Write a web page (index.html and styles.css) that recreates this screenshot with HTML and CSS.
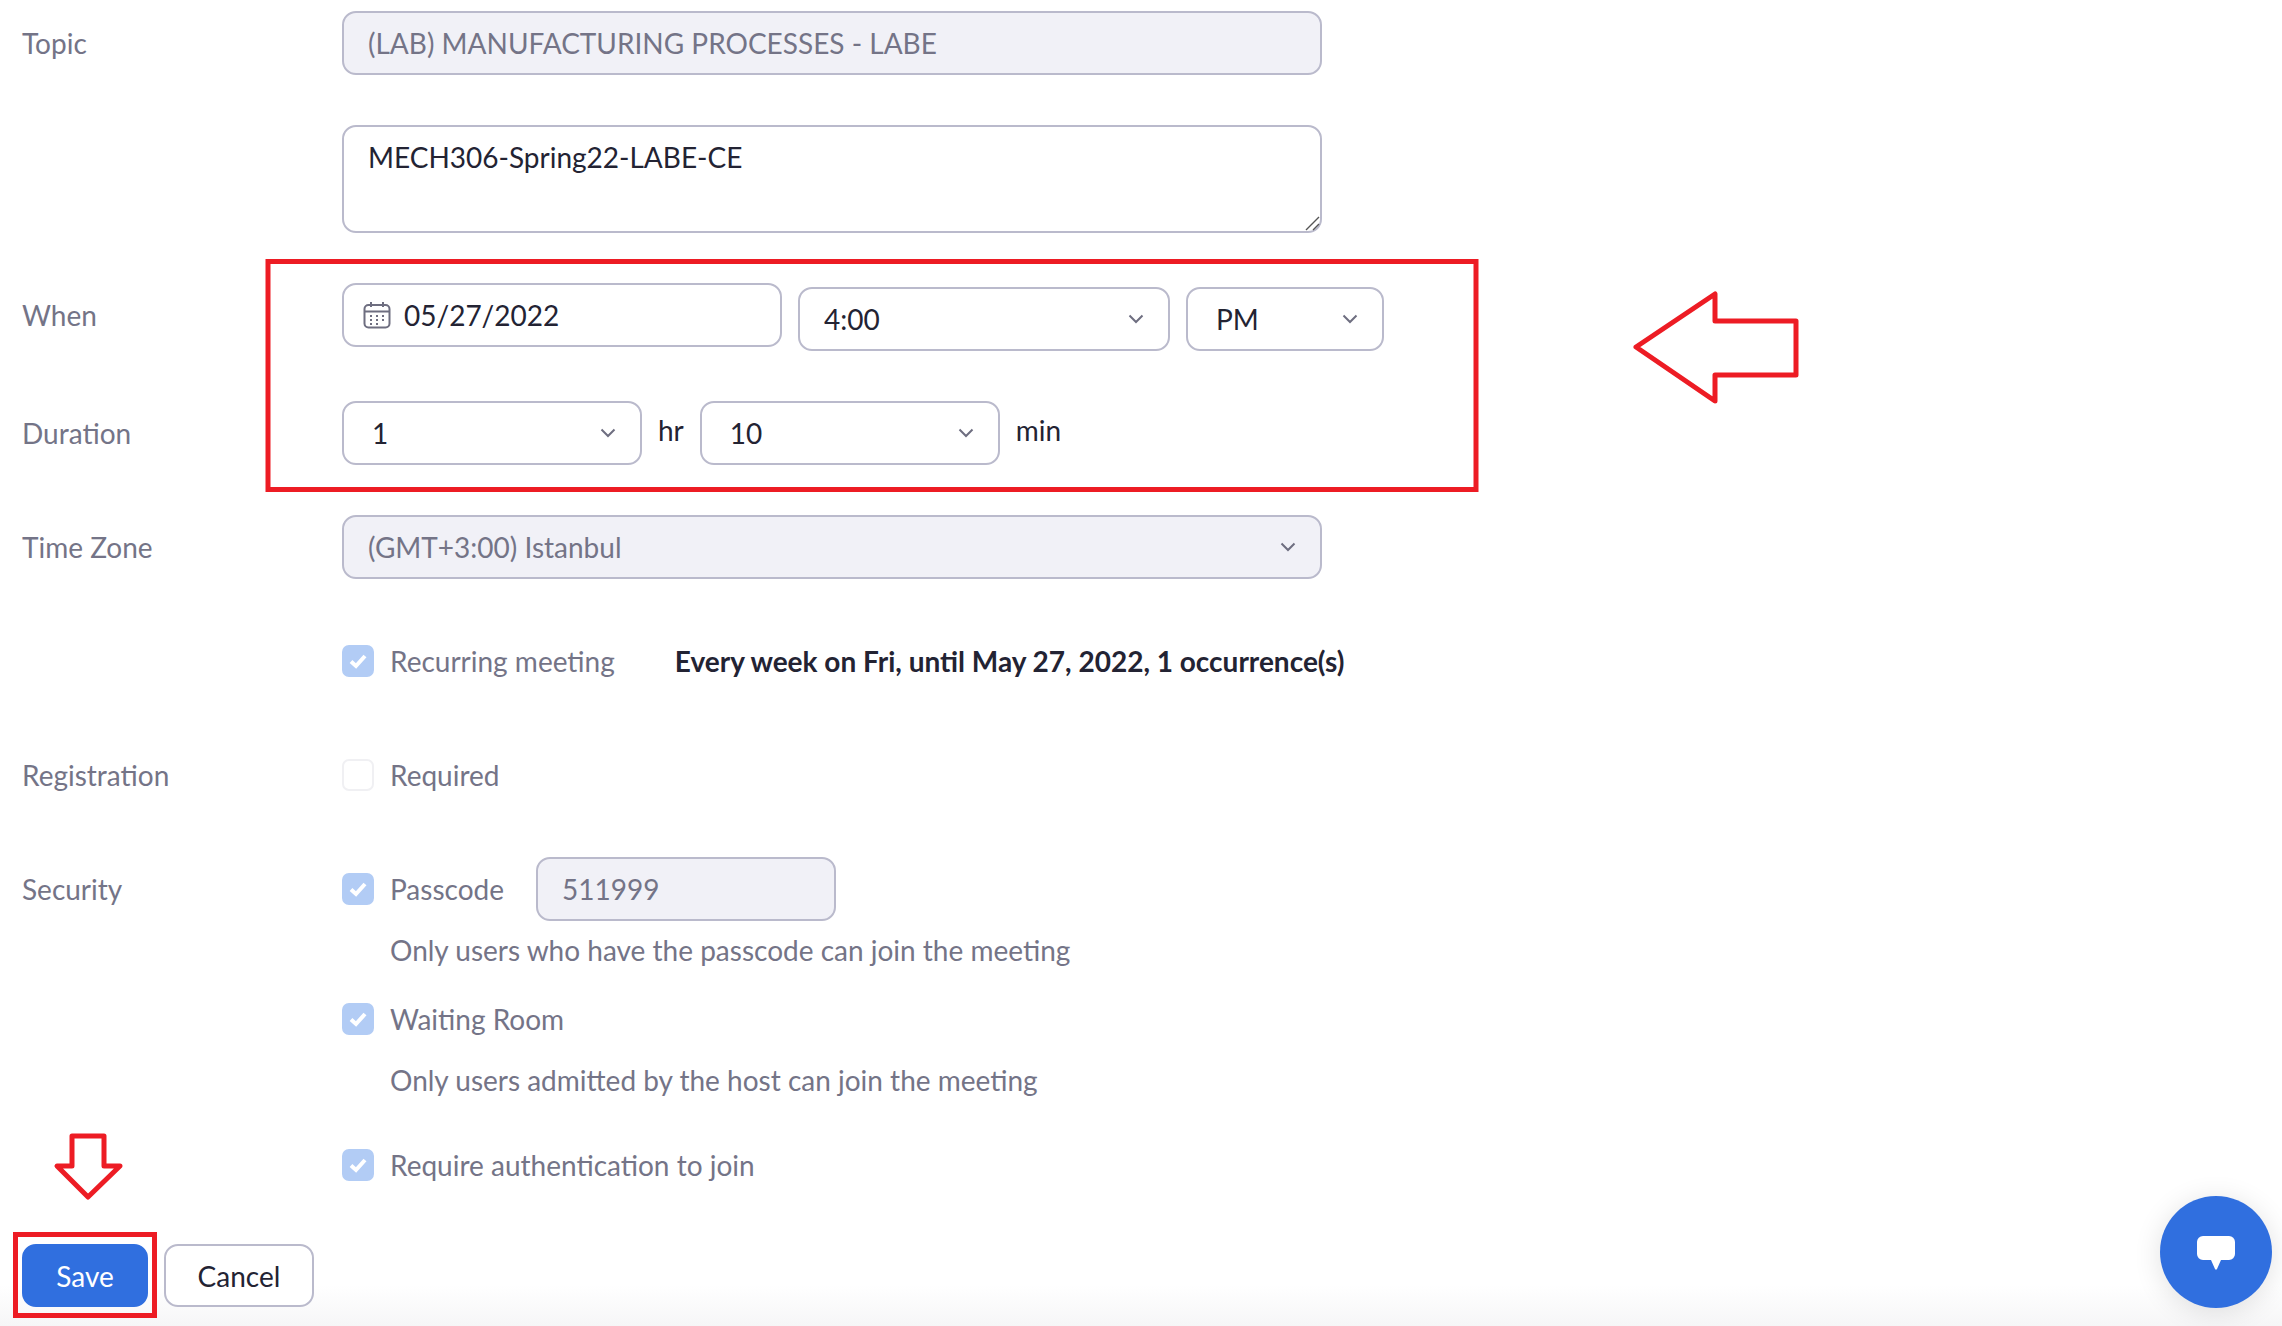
FILE: index.html
```html
<!DOCTYPE html>
<html lang="en">
<head>
<meta charset="utf-8">
<title>Edit Meeting</title>
<link rel="stylesheet" href="styles.css">
</head>
<body>
<main class="form">
  <div class="row">
    <div class="label">Topic</div>
    <div class="field wide disabled">(LAB) MANUFACTURING PROCESSES - LABE</div>
  </div>
  <div class="row">
    <div class="label"></div>
    <div class="field wide textarea">MECH306-Spring22-LABE-CE
      <svg class="grip" width="16" height="16" viewBox="0 0 16 16"><path d="M2 15 15 2M9 15l6-6" stroke="#555" stroke-width="1.4" fill="none"/></svg>
    </div>
  </div>
  <div class="row when">
    <div class="label when-label">When</div>
    <div class="field date">
      <svg class="cal" width="28" height="28" viewBox="0 0 28 28" fill="none" stroke="#6e6e80" stroke-width="2"><rect x="1.5" y="4" width="25" height="22.5" rx="4"/><path d="M2 10.500h24M8 1v5M20 1v5"/><path d="M7 15h2M13 15h2M19 15h2M7 19h2M13 19h2M19 19h2M7 23h2M13 23h2" stroke-width="2"/></svg>
      05/27/2022
    </div>
    <div class="field select time">4:00<svg class="chev" width="16" height="10" viewBox="0 0 16 10"><path d="M1.500 1.500 8 8l6.500-6.500" /></svg></div>
    <div class="field select ampm">PM<svg class="chev" width="16" height="10" viewBox="0 0 16 10"><path d="M1.500 1.500 8 8l6.500-6.500" /></svg></div>
  </div>
  <div class="row">
    <div class="label">Duration</div>
    <div class="field select dur">1<svg class="chev" width="16" height="10" viewBox="0 0 16 10"><path d="M1.500 1.500 8 8l6.500-6.500" /></svg></div>
    <span class="unit">hr</span>
    <div class="field select dur">10<svg class="chev" width="16" height="10" viewBox="0 0 16 10"><path d="M1.500 1.500 8 8l6.500-6.500" /></svg></div>
    <span class="unit">min</span>
  </div>
  <div class="row">
    <div class="label">Time Zone</div>
    <div class="field wide select disabled">(GMT+3:00) Istanbul<svg class="chev" width="16" height="10" viewBox="0 0 16 10"><path d="M1.500 1.500 8 8l6.500-6.500" /></svg></div>
  </div>
  <div class="row">
    <div class="label"></div>
    <span class="check on"><svg width="20" height="16" viewBox="0 0 20 16"><path d="M3 8.500 8 13 17 3"/></svg></span>
    <span class="opt">Recurring meeting</span>
    <strong class="recur">Every week on Fri, until May 27, 2022, 1 occurrence(s)</strong>
  </div>
  <div class="row">
    <div class="label">Registration</div>
    <span class="check"></span>
    <span class="opt">Required</span>
  </div>
  <div class="row">
    <div class="label">Security</div>
    <span class="check on"><svg width="20" height="16" viewBox="0 0 20 16"><path d="M3 8.500 8 13 17 3"/></svg></span>
    <span class="opt">Passcode</span>
    <div class="field code disabled">511999</div>
  </div>
  <div class="row help first">Only users who have the passcode can join the meeting</div>
  <div class="row tight waiting">
    <div class="label"></div>
    <span class="check on"><svg width="20" height="16" viewBox="0 0 20 16"><path d="M3 8.500 8 13 17 3"/></svg></span>
    <span class="opt">Waiting Room</span>
  </div>
  <div class="row help">Only users admitted by the host can join the meeting</div>
  <div class="row tight auth">
    <div class="label"></div>
    <span class="check on"><svg width="20" height="16" viewBox="0 0 20 16"><path d="M3 8.500 8 13 17 3"/></svg></span>
    <span class="opt">Require authentication to join</span>
  </div>
  <div class="actions">
    <button class="btn primary">Save</button>
    <button class="btn">Cancel</button>
  </div>
</main>

<div class="chat">
  <svg width="40" height="36" viewBox="0 0 40 36"><path d="M7 1h26a6 6 0 0 1 6 6v12a6 6 0 0 1-6 6h-8l-4 9a1.200 1.200 0 0 1-2 0l-4-9H7a6 6 0 0 1-6-6V7a6 6 0 0 1 6-6Z" fill="#fff"/></svg>
</div>

<svg class="marks" width="2282" height="1326" viewBox="0 0 2282 1326" fill="none" stroke="#ed1c24" stroke-width="5">
  <rect x="268" y="261.500" width="1208" height="228"/>
  <rect x="15.500" y="1234.500" width="139" height="81"/>
  <path stroke-linejoin="round" d="M1636 347 1715 294V321H1796V375H1715V401Z"/>
  <path stroke-linejoin="round" d="M72 1136H104V1166H120L88 1197 57 1166H72Z"/>
</svg>
</body>
</html>
```
FILE: styles.css
```css
* { box-sizing: border-box; }
html, body { margin: 0; height: 1326px; overflow: hidden; }
body {
  position: relative;
  background: linear-gradient(to bottom, #fff 1285px, #f6f6f7 1326px);
  font-family: Lato, "Open Sans", sans-serif;
  font-size: 28px;
  color: #232333;
}
.form { display: flex; flex-direction: column; padding: 11px 0 0 22px; }
.row { display: flex; align-items: center; min-height: 64px; margin-bottom: 50px; }
.label { width: 320px; flex: none; color: #747487; }
.field {
  position: relative;
  display: flex;
  align-items: center;
  height: 64px;
  padding: 0 24px;
  border: 2px solid #babacc;
  border-radius: 14px;
  background: #fff;
}
.wide { width: 980px; }
.disabled { background: #f1f1f7; color: #747487; }
.textarea { height: 108px; align-items: flex-start; padding-top: 13px; }
.grip { position: absolute; right: 0; bottom: 0; }
.when { align-items: flex-end; height: 68px; }
.when-label { align-self: flex-start; line-height: 64px; }
.date { width: 440px; padding-left: 19px; align-self: flex-start; }
.cal { margin-right: 13px; }
.select { justify-content: space-between; }
.chev { fill: none; stroke: #6e6e80; stroke-width: 2; flex: none; }
.time { width: 372px; margin-left: 16px; }
.ampm { width: 198px; margin-left: 16px; padding-left: 28px; }
.dur { width: 300px; padding-left: 28px; }
.unit { margin: -6px 16px 0 16px; }
.check {
  display: flex;
  align-items: center;
  justify-content: center;
  width: 32px;
  height: 32px;
  flex: none;
  border: 2px solid #f0f0f3;
  border-radius: 7px;
  background: #fff;
}
.check.on { background: #b2ccf5; border-color: #b2ccf5; }
.check svg { fill: none; stroke: #fff; stroke-width: 4; }
.opt { margin-left: 16px; color: #747487; }
.recur { margin-left: 60px; font-weight: 700; }
.code { width: 300px; margin-left: 32px; }
.help { margin: 0 0 0 368px; min-height: 0; height: 34px; line-height: 34px; color: #747487; }
.help.first { margin-top: -38px; }
.tight { min-height: 0; height: 34px; margin-bottom: 0; }
.waiting { margin-top: 35px; }
.waiting + .help { margin-top: 27px; }
.auth { margin-top: 51px; }
.actions { display: flex; gap: 16px; margin-top: 62px; }
.btn {
  height: 63px;
  width: 150px;
  border: 2px solid #babacc;
  border-radius: 14px;
  background: #fff;
  color: #232333;
  font: inherit;
  padding: 0;
}
.primary { width: 126px; background: #306fdf; border-color: #306fdf; color: #fff; }
.chat {
  position: absolute;
  left: 2160px;
  top: 1196px;
  width: 112px;
  height: 112px;
  display: flex;
  align-items: center;
  justify-content: center;
  padding-top: 2px;
  border-radius: 50%;
  background: #306fdf;
  box-shadow: 0 4px 28px rgba(0, 0, 0, .12);
}
.marks { position: absolute; left: 0; top: 0; pointer-events: none; }
```
